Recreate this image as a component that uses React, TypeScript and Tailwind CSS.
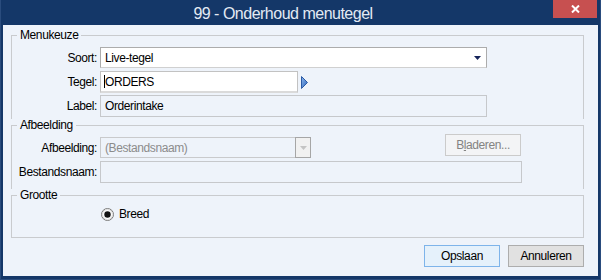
import React from 'react';

const font = "font-['Liberation_Sans',Arial,sans-serif]";

const Label: React.FC<{ children: React.ReactNode }> = ({ children }) => (
  <div className="w-[85px] h-[21px] flex items-center justify-end text-black">{children}</div>
);

const GroupLegend: React.FC<{ children: React.ReactNode }> = ({ children }) => (
  <legend className="ml-[5px] px-[3px] leading-[13px] text-black">{children}</legend>
);

export default function App() {
  return (
    <div className={`${font} w-[601px] h-[280px] bg-[#143768] border-l border-r border-b border-[#2a4c7d] flex flex-col`}>
      {/* Title bar */}
      <div className="h-[25px] flex shrink-0">
        <div className="flex-1 pl-[12px] pt-[5px] text-center text-[16px] leading-[18px] tracking-[-0.5px] text-[#e3eaf4]">
          99 - Onderhoud menutegel
        </div>
        <button className="w-[44px] h-[18px] mr-[3px] bg-[#c75050] flex items-center justify-center">
          <svg width="9" height="8" viewBox="0 0 9 8">
            <path d="M1 0.5 L8 7.5 M8 0.5 L1 7.5" stroke="#ffffff" strokeWidth="2" />
          </svg>
        </button>
      </div>

      {/* Client area */}
      <div className="mx-[2px] mb-[3px] flex-1 bg-[#eef3fa] pl-[8px] pt-[4px] text-[12px] tracking-[-0.4px] text-black">
        {/* Menukeuze */}
        <fieldset className="w-[573px] border-t border-l border-r border-[#c9cbce]">
          <GroupLegend>Menukeuze</GroupLegend>
          <div className="pt-[5px] pb-[2px]">
            <div className="flex items-center">
              <Label>Soort:</Label>
              <div className="ml-[3px] w-[387px] h-[21px] bg-white border border-[#acacac] border-b-[#d0d0d0] flex items-center pl-[4px] pr-[5px]">
                <span className="flex-1">Live-tegel</span>
                <svg width="7" height="4" viewBox="0 0 7 4">
                  <polygon points="0,0 7,0 3.5,4" fill="#16245a" />
                </svg>
              </div>
            </div>
            <div className="flex items-center mt-[3px]">
              <div className="w-[85px] h-[22px] flex items-center justify-end">Tegel:</div>
              <div className="relative ml-[3px] w-[198px] h-[22px] bg-white border border-[#c2c2c2] border-b-2 border-b-[#dadada] flex items-center pl-[4px]">
                <span className="absolute left-[3px] top-[3px] w-px h-[13px] bg-black" />
                ORDERS
              </div>
              <svg className="ml-[3px]" width="7" height="13" viewBox="0 0 7 13">
                <defs>
                  <linearGradient id="arr" x1="0" y1="0" x2="1" y2="1">
                    <stop offset="0" stopColor="#8db8ee" />
                    <stop offset="1" stopColor="#2a62b8" />
                  </linearGradient>
                </defs>
                <polygon points="0.5,0.5 6.5,6.5 0.5,12.5" fill="url(#arr)" stroke="#2b5aa5" strokeWidth="1" />
              </svg>
            </div>
            <div className="flex items-center mt-[2px]">
              <div className="w-[85px] h-[22px] flex items-center justify-end">Label:</div>
              <div className="ml-[3px] w-[387px] h-[22px] border border-[#c6c8cb] flex items-center pl-[4px]">
                Orderintake
              </div>
            </div>
          </div>
        </fieldset>

        {/* Afbeelding */}
        <fieldset className="w-[573px] border-t border-l border-r border-[#c9cbce]">
          <GroupLegend>Afbeelding</GroupLegend>
          <div className="pt-[5px] pb-[6px]">
            <div className="flex items-start">
              <Label>Afbeelding:</Label>
              <div className="ml-[3px] w-[211px] h-[21px] flex">
                <div className="flex-1 border-y border-l border-[#c9cacc] flex items-center pl-[4px] text-[#8c8c8c]">
                  (Bestandsnaam)
                </div>
                <div className="w-[16px] h-[21px] border border-[#a6a6a6] bg-[#f1f1f1] flex items-center justify-center">
                  <svg width="7" height="4" viewBox="0 0 7 4">
                    <polygon points="0,0 7,0 3.5,4" fill="#c4c4c4" />
                  </svg>
                </div>
              </div>
              <button className="ml-[134px] -mt-[3px] w-[76px] h-[22px] border border-[#cbcbcb] bg-[#f3f4f6] text-[#838383] flex items-center justify-center">
                B<span className="underline">l</span>aderen...
              </button>
            </div>
            <div className="flex items-center mt-[3px]">
              <div className="w-[85px] h-[22px] flex items-center justify-end">Bestandsnaam:</div>
              <div className="ml-[3px] w-[422px] h-[22px] border border-[#c6c8cb]" />
            </div>
          </div>
        </fieldset>

        {/* Grootte */}
        <fieldset className="w-[573px] border border-[#c9cbce]">
          <GroupLegend>Grootte</GroupLegend>
          <div className="pt-[6px] pb-[16px] pl-[89px] flex items-center">
            <svg width="13" height="13" viewBox="0 0 13 13">
              <circle cx="6.5" cy="6.5" r="6" fill="#ffffff" stroke="#7a7a7a" strokeWidth="1" />
              <circle cx="6.5" cy="6.5" r="5" fill="none" stroke="#d8d8d8" strokeWidth="1" />
              <circle cx="6.5" cy="6.5" r="3.2" fill="#111111" />
            </svg>
            <span className="ml-[5px] leading-[13px]">Breed</span>
          </div>
        </fieldset>

        {/* Buttons */}
        <div className="w-[573px] mt-[7px] flex justify-end gap-[8px]">
          <button className="w-[76px] h-[22px] border border-[#7eb4ea] bg-[#e5f1fb] flex items-center justify-center">
            Opslaan
          </button>
          <button className="w-[76px] h-[22px] border border-[#adadad] bg-[#e1e1e1] flex items-center justify-center">
            Annuleren
          </button>
        </div>
      </div>
    </div>
  );
}
